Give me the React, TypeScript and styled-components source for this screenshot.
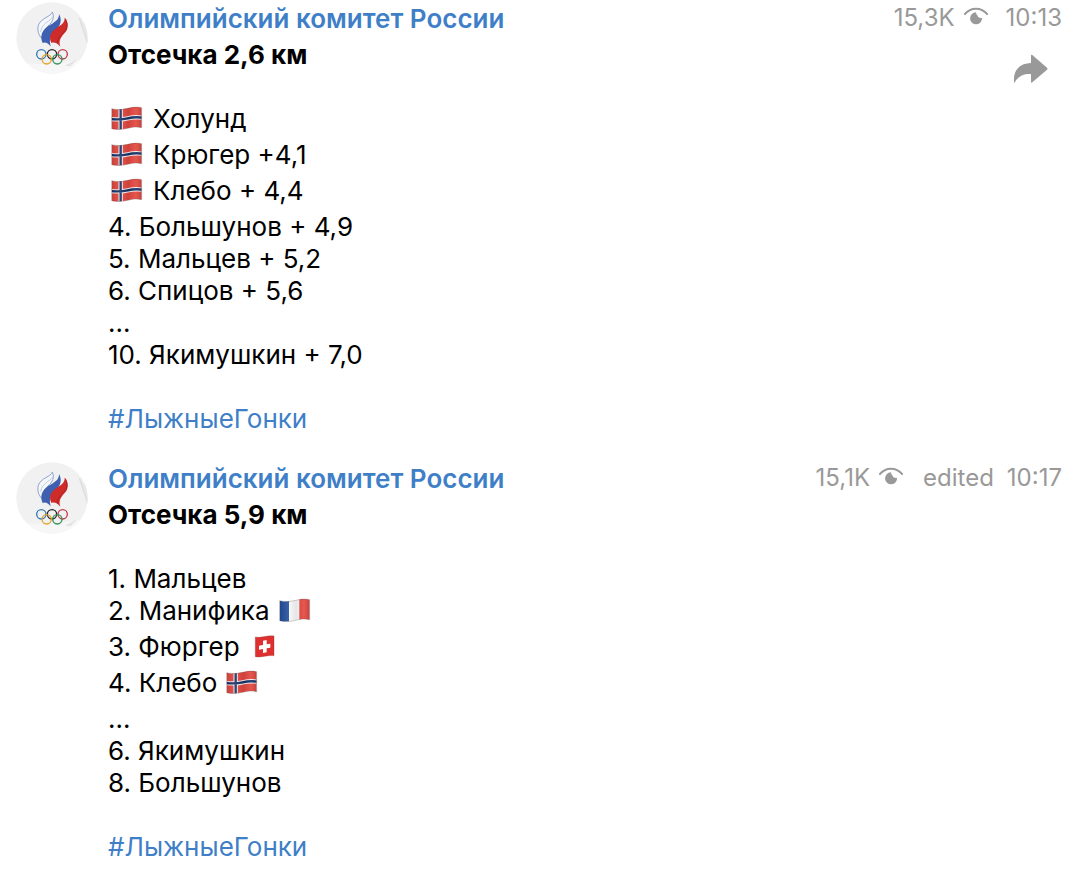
import React from "react";
import styled, { createGlobalStyle } from "styled-components";

const GlobalStyle = createGlobalStyle`
  body {
    margin: 0;
    background: #fff;
    color: #000;
    font-family: Inter, "Liberation Sans", sans-serif;
    font-size: 26px;
    line-height: 32px;
  }
`;

const Feed = styled.main`
  display: flex;
  flex-direction: column;
  gap: 25px;
`;

const Message = styled.article`
  display: flex;
  align-items: flex-start;
  gap: 20px;
  padding: 2px 16px 0;
`;

const Avatar = styled.svg`
  flex: none;
  width: 72px;
  height: 72px;
`;

const Body = styled.div`
  flex: 1;
  min-width: 0;
`;

const Header = styled.header`
  display: flex;
  justify-content: space-between;
  gap: 16px;
  line-height: 34px;
`;

const Author = styled.a`
  color: #3f7fc8;
  font-weight: 600;
  text-decoration: none;
`;

const Meta = styled.div<{ $edited?: boolean }>`
  display: flex;
  gap: ${(p) => (p.$edited ? 20 : 18)}px;
  font-size: 24px;
  line-height: 32px;
  color: #999;
  white-space: nowrap;
`;

const Views = styled.span`
  display: flex;
  gap: 9px;
`;

const Stamp = styled.span`
  display: flex;
  gap: 13px;
`;

const Eye = styled.svg`
  width: 24px;
  height: 19px;
  margin-top: 5px;
`;

const Content = styled.div`
  display: flex;
  align-items: flex-start;
  justify-content: space-between;
  margin-top: 3px;
`;

const Title = styled.h2`
  margin: 0 0 32px;
  font-size: 26px;
  line-height: 32px;
  font-weight: 700;
`;

const Row = styled.p<{ $tall?: boolean; $lead?: boolean }>`
  display: flex;
  align-items: flex-start;
  gap: ${(p) => (p.$lead ? 8 : 7)}px;
  margin: 0;
  padding-left: ${(p) => (p.$lead ? 1 : 0)}px;
  height: ${(p) => (p.$tall ? 36 : 32)}px;
  white-space: nowrap;
`;

const FlagBox = styled.svg`
  flex: none;
  width: 36px;
  height: 24px;
  margin-top: 3px;
`;

const Tag = styled.a`
  display: inline-block;
  margin-top: 32px;
  color: #3f7fc8;
  text-decoration: none;
`;

const Forward = styled.button`
  display: flex;
  margin: 15px 13px 0 0;
  padding: 0;
  border: 0;
  background: none;
  color: #999;
  cursor: pointer;
`;

type Country = "no" | "fr" | "ch";
type Line = { text: string; flag?: Country; lead?: boolean };

const waved = "M8 8C24 12 40 11 56 7S84 2 98 5V65C84 62 72 63 56 67S24 72 8 68Z";
const names = { no: "Норвегия", fr: "Франция", ch: "Швейцария" };

function Flag({ country, id }: { country: Country; id: string }) {
  return (
    <FlagBox viewBox="0 0 108 72" role="img" aria-label={names[country]}>
      <defs>
        <clipPath id={id}>
          <path d={waved} />
        </clipPath>
        <linearGradient id={id + "s"}>
          <stop offset="0" stopColor="#000" stopOpacity=".1" />
          <stop offset=".3" stopColor="#fff" stopOpacity=".1" />
          <stop offset=".55" stopColor="#000" stopOpacity=".08" />
          <stop offset=".8" stopColor="#fff" stopOpacity=".08" />
          <stop offset="1" stopColor="#000" stopOpacity=".14" />
        </linearGradient>
      </defs>
      {country === "no" && (
        <g clipPath={`url(#${id})`}>
          <rect width="108" height="72" fill="#e2473f" />
          <g fill="none" stroke="#f4eef0" strokeWidth="13">
            <path d="M35 0V72M0 38C24 42 40 41 56 37S84 32 108 36" />
          </g>
          <g fill="none" stroke="#163166" strokeWidth="7">
            <path d="M35 0V72M0 38C24 42 40 41 56 37S84 32 108 36" />
          </g>
        </g>
      )}
      {country === "fr" && (
        <g clipPath={`url(#${id})`}>
          <rect width="38" height="72" fill="#244f9e" />
          <rect x="36" width="32" height="72" fill="#fafafa" />
          <rect x="67" width="41" height="72" fill="#e34840" />
        </g>
      )}
      {country === "ch" && (
        <>
          <path d="M25 9C43 13 61 3 81 6V65C62 62 44 72 25 68Z" fill="#dd302f" />
          <path d="M48 20L59 18V31L70 29V41L59 43V55L48 57V45L36 47V35L48 33Z" fill="#fff" />
          <path
            d="M25 9C43 13 61 3 81 6V65C62 62 44 72 25 68Z"
            fill="none"
            stroke="#8c3430"
            strokeOpacity=".5"
            strokeWidth="2"
          />
        </>
      )}
      {country !== "ch" && (
        <path d={waved} fill={`url(#${id}s)`} stroke="#554444" strokeOpacity=".4" strokeWidth="2" />
      )}
    </FlagBox>
  );
}

function Emblem({ id }: { id: string }) {
  return (
    <Avatar viewBox="18 6 216 216" role="img" aria-label="Олимпийский комитет России">
      <defs>
        <clipPath id={id}>
          <circle cx="126" cy="114" r="107" />
        </clipPath>
      </defs>
      <g clipPath={`url(#${id})`}>
        <rect x="18" y="6" width="216" height="216" fill="#f1f1f1" />
        <path d="M208 54L240 151V90Z" fill="#e9e9e9" />
        <path d="M208 54L240 151" stroke="#dedede" strokeWidth="4" />
        <path d="M18 186Q100 196 140 191Q190 184 234 174V222H18Z" fill="#f7f7f7" />
        <path d="M164 197L203 177L181 199Z" fill="#e3e3e3" />
      </g>
      <path
        d="M127 36C124 50 92 54 85 76C81 92 86 106 96 116C96 99 102 88 114 78C128 66 134 52 127 36Z"
        fill="#f5f7fb"
        stroke="#8fa3cd"
        strokeWidth="3"
      />
      <path d="M128 50C122 64 95 68 92 96" fill="none" stroke="#a9b9da" strokeWidth="2" />
      <path
        d="M147 42C156 58 153 76 138 90C123 104 116 116 122 139C114 129 106 125 98 129C89 110 96 92 114 79C134 66 148 60 147 42Z"
        fill="#3f5fb0"
      />
      <path
        d="M164 53C175 66 177 84 166 97C152 112 145 122 151 140C143 130 132 125 124 129C116 112 121 98 138 85C153 75 165 68 164 53Z"
        fill="#cf2b28"
      />
      <path d="M166 56C174 70 172 86 160 98C147 111 141 119 143 131" fill="none" stroke="#a9242a" strokeWidth="3" />
      <g fill="none" strokeWidth="4">
        <circle cx="94" cy="163" r="14" stroke="#2f78b4" />
        <circle cx="126" cy="163" r="14" stroke="#222" />
        <circle cx="158" cy="163" r="14" stroke="#c23a4a" />
        <circle cx="110" cy="178" r="14" stroke="#e3a432" />
        <circle cx="142" cy="178" r="14" stroke="#33905c" />
      </g>
    </Avatar>
  );
}

const posts: {
  id: string;
  title: string;
  views: string;
  time: string;
  edited?: boolean;
  forward?: boolean;
  lines: Line[];
}[] = [
  {
    id: "a",
    title: "Отсечка 2,6 км",
    views: "15,3K",
    time: "10:13",
    forward: true,
    lines: [
      { text: "Холунд", flag: "no", lead: true },
      { text: "Крюгер +4,1", flag: "no", lead: true },
      { text: "Клебо + 4,4", flag: "no", lead: true },
      { text: "4. Большунов + 4,9" },
      { text: "5. Мальцев + 5,2" },
      { text: "6. Спицов + 5,6" },
      { text: "..." },
      { text: "10. Якимушкин + 7,0" },
    ],
  },
  {
    id: "b",
    title: "Отсечка 5,9 км",
    views: "15,1K",
    time: "10:17",
    edited: true,
    lines: [
      { text: "1. Мальцев" },
      { text: "2. Манифика", flag: "fr" },
      { text: "3. Фюргер", flag: "ch" },
      { text: "4. Клебо", flag: "no" },
      { text: "..." },
      { text: "6. Якимушкин" },
      { text: "8. Большунов" },
    ],
  },
];

export default function App() {
  return (
    <>
      <GlobalStyle />
      <Feed>
        {posts.map((post) => (
          <Message key={post.id}>
            <Emblem id={`emblem-${post.id}`} />
            <Body>
              <Header>
                <Author href="#channel">Олимпийский комитет России</Author>
                <Meta $edited={post.edited}>
                  <Views>
                    {post.views}
                    <Eye viewBox="249 22 72 57" aria-hidden="true">
                      <path d="M250 45Q264 27 285 27T320 45" fill="none" stroke="#999" strokeWidth="6" />
                      <path
                        d="M285 38A18 18 0 1 0 303 54Q299 56 293 53Q290 51 290 48Q285 45 285 38Z"
                        fill="#999"
                      />
                    </Eye>
                  </Views>
                  <Stamp>
                    {post.edited && <span>edited</span>}
                    <time>{post.time}</time>
                  </Stamp>
                </Meta>
              </Header>
              <Content>
                <div>
                  <Title>{post.title}</Title>
                  {post.lines.map((line, i) => {
                    const flag = line.flag && <Flag country={line.flag} id={`flag-${post.id}-${i}`} />;
                    return (
                      <Row key={i} $tall={!!line.flag} $lead={line.lead}>
                        {line.lead && flag}
                        <span>{line.text}</span>
                        {!line.lead && flag}
                      </Row>
                    );
                  })}
                  <Tag href="#ski">#ЛыжныеГонки</Tag>
                </div>
                {post.forward && (
                  <Forward type="button" aria-label="Переслать">
                    <svg width="36" height="30" viewBox="399 160 108 90" aria-hidden="true">
                      <path
                        d="M403 248C397 214 415 188 453 187V165Q453 160 457 163L501 201Q504 204 501 207L457 245Q453 248 453 243V220C430 219 413 227 403 248Z"
                        fill="currentColor"
                      />
                    </svg>
                  </Forward>
                )}
              </Content>
            </Body>
          </Message>
        ))}
      </Feed>
    </>
  );
}
